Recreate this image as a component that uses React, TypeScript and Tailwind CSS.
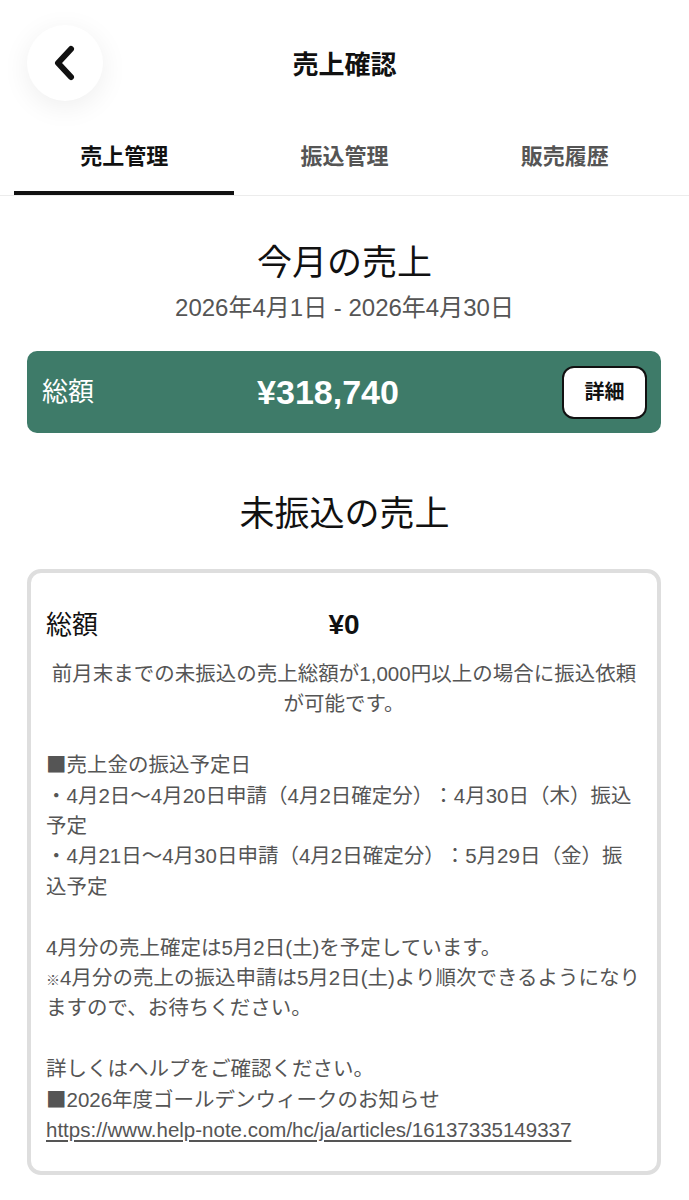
import { type ReactNode } from "react";

const tabs = ["売上管理", "振込管理", "販売履歴"];

// fixed-height rows so mixed fonts don't push the lines apart
const Line = ({ children, rows = 1 }: { children?: ReactNode; rows?: 1 | 2 }) => (
  <p className={rows === 2 ? "h-[60.8px]" : "h-[30.4px]"}>{children}</p>
);

// square bullet rendered with the CJK font so it keeps full size
const Sq = () => <span className="font-['Noto_Sans_CJK_JP'] leading-none">■</span>;

const BackButton = () => (
  <button
    type="button"
    className="absolute left-[27px] top-[25px] flex h-[76px] w-[76px] items-center justify-center rounded-full bg-white shadow-[0_6px_28px_rgba(0,0,0,0.07)]"
  >
    <svg width="24" height="38" viewBox="0 0 24 38" className="-ml-[3px]">
      <path
        d="M19 5 L6 19 L19 33"
        fill="none"
        stroke="#111"
        strokeWidth="6"
        strokeLinecap="round"
        strokeLinejoin="round"
      />
    </svg>
  </button>
);

export default function App() {
  return (
    <div className="min-h-[1200px] w-full bg-white font-['Liberation_Sans','Noto_Sans_CJK_JP',sans-serif] text-[#111] [text-spacing-trim:space-all]">
      {/* header */}
      <header className="relative flex h-[126px] items-start justify-center">
        <BackButton />
        <h1 className="mt-[46px] text-[26px] font-bold leading-[38px]">売上確認</h1>
      </header>

      {/* tabs */}
      <nav className="grid grid-cols-3 border-b border-[#ececec] px-[14px]">
        {tabs.map((t, i) => (
          <div
            key={t}
            className={`flex h-[69px] items-start justify-center pt-[16px] text-[22px] font-bold leading-[30px] ${
              i === 0 ? "-mb-px border-b-[4px] border-[#111] text-[#111]" : "text-[#555]"
            }`}
          >
            {t}
          </div>
        ))}
      </nav>

      <main className="px-[27px]">
        <section className="flex flex-col items-center pt-[42px]">
          <h2 className="text-[35px] leading-[50px]">今月の売上</h2>
          <p className="mt-[4px] text-[24px] leading-[32px] text-[#555]">
            2026年4月1日 - 2026年4月30日
          </p>
        </section>

        <div className="mt-[27px] mr-[1px] flex h-[82px] items-center justify-between rounded-[10px] bg-[#3e7b69] pl-[15px] pr-[14px] text-white">
          <span className="text-[26px] leading-none">総額</span>
          <span className="text-[34px] font-bold leading-none">¥318,740</span>
          <button
            type="button"
            className="flex h-[53px] w-[85px] items-center justify-center rounded-[12px] border-2 border-[#111] bg-white text-[20px] font-bold text-[#111]"
          >
            詳細
          </button>
        </div>

        <h2 className="mt-[56px] text-center text-[35px] leading-[50px]">未振込の売上</h2>

        <div className="mt-[30px] mr-[1px] rounded-[14px] border-[4px] border-[#dedede] px-[15px] pt-[34px] pb-[26px]">
          <div className="grid grid-cols-[1fr_auto_1fr] items-center">
            <span className="text-[26px] leading-[36px]">総額</span>
            <span className="text-[28px] font-bold leading-[36px]">¥0</span>
            <span />
          </div>

          <div className="mt-[16px] text-[20.5px] leading-[30.4px] text-[#555]">
            <p className="h-[60.8px] text-center">
              前月末までの未振込の売上総額が1,000円以上の場合に振込依頼
              <br />
              が可能です。
            </p>
            <Line />
            <Line>
              <Sq />売上金の振込予定日
            </Line>
            <Line rows={2}>
              ・4月2日〜4月20日申請（4月2日確定分）：4月30日（木）振込
              <br />
              予定
            </Line>
            <Line rows={2}>
              ・4月21日〜4月30日申請（4月2日確定分）：5月29日（金）振
              <br />
              込予定
            </Line>
            <Line />
            <Line>4月分の売上確定は5月2日(土)を予定しています。</Line>
            <Line rows={2}>
              <span className="text-[14px] leading-none">※</span>
              4月分の売上の振込申請は5月2日(土)より順次できるようになり
              <br />
              ますので、お待ちください。
            </Line>
            <Line />
            <Line>詳しくはヘルプをご確認ください。</Line>
            <Line>
              <Sq />2026年度ゴールデンウィークのお知らせ
            </Line>
            <Line>
              <a href="#" className="underline underline-offset-[3px]">
                https://www.help-note.com/hc/ja/articles/16137335149337
              </a>
            </Line>
          </div>
        </div>
      </main>
    </div>
  );
}
